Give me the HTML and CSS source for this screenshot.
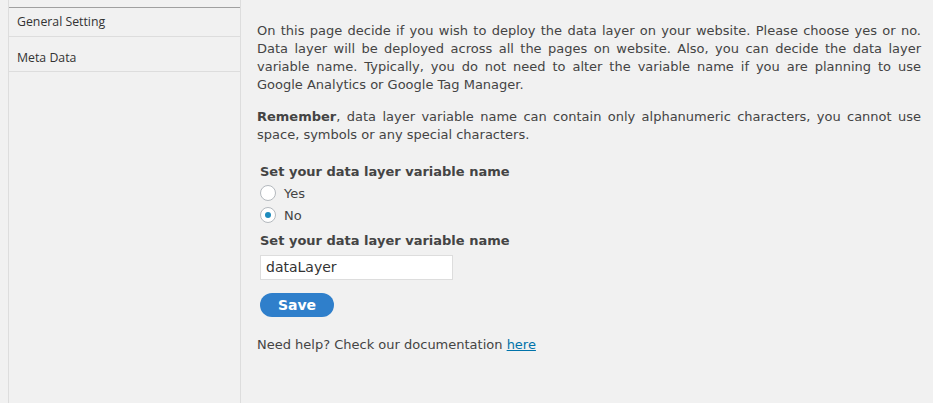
FILE: index.html
```html
<!DOCTYPE html>
<html>
<head>
<meta charset="utf-8">
<link rel="stylesheet" href="styles.css">
</head>
<body>
<div class="wrap">
  <nav class="sidebar">
    <div class="nav-item">General Setting</div>
    <div class="nav-item">Meta Data</div>
  </nav>
  <main class="content">
    <p class="intro">On this page decide if you wish to deploy the data layer on your website. Please choose yes or no. Data layer will be deployed across all the pages on website. Also, you can decide the data layer variable name. Typically, you do not need to alter the variable name if you are planning to use Google Analytics or Google Tag Manager.</p>
    <p class="intro"><strong>Remember</strong>, data layer variable name can contain only alphanumeric characters, you cannot use space, symbols or any special characters.</p>
    <form class="form">
      <div class="label">Set your data layer variable name</div>
      <div class="radios">
        <label class="radio"><span class="dot"></span>Yes</label>
        <label class="radio"><span class="dot checked"></span>No</label>
      </div>
      <div class="label label2">Set your data layer variable name</div>
      <div class="input">dataLayer</div>
      <div class="btn">Save</div>
    </form>
    <p class="help">Need help? Check our documentation <a href="#">here</a></p>
  </main>
</div>
</body>
</html>
```
FILE: styles.css
```css
html, body { margin: 0; padding: 0; }
body {
  background: #f1f1f1;
  font-family: "DejaVu Sans", Verdana, sans-serif;
  font-size: 13px;
  color: #444;
}
.wrap {
  display: flex;
  padding-left: 8px;
  height: 403px;
  box-sizing: border-box;
}
.sidebar {
  width: 231px;
  border-left: 1px solid #ddd;
  border-right: 1px solid #ddd;
  padding-top: 7px;
  flex-shrink: 0;
  font-family: "Open Sans", "Noto Sans", sans-serif;
}
.nav-item {
  border-bottom: 1px solid #ddd;
  box-sizing: border-box;
  line-height: 28px;
  padding-left: 8px;
  font-size: 12.3px;
  color: #333;
}
.nav-item:first-child {
  border-top: 1px solid #a0a0a0;
  height: 30px;
}
.nav-item:last-child { height: 35px; padding-top: 7px; }
.content {
  flex: 1;
  padding: 22px 12px 0 16px;
}
.intro {
  margin: 0 0 14px 0;
  line-height: 18px;
  text-align: justify;
}
.intro + .intro { margin-bottom: 0; }
.form { padding-left: 3px; margin-top: 19px; }
.label { font-weight: bold; line-height: 18px; }
.radios { padding-top: 1px; }
.radio {
  display: flex;
  align-items: center;
  height: 22px;
}
.dot {
  width: 14px; height: 14px;
  border: 1px solid #b4b9be;
  border-radius: 50%;
  background: #fff;
  margin-right: 8px;
  box-sizing: content-box;
  display: flex; align-items: center; justify-content: center;
}
.dot.checked::after {
  content: "";
  width: 6px; height: 6px; border-radius: 50%;
  background: #1e8cbe;
}
.label2 { margin-top: 6px; }
.input {
  margin-top: 5px;
  width: 186px;
  height: 23px;
  border: 1px solid #ddd;
  background: #fff;
  padding-left: 5px;
  line-height: 23px;
  font-size: 14px;
  color: #333;
}
.btn {
  margin-top: 13px;
  width: 74px;
  height: 24px;
  border-radius: 12px;
  background: #2f7fcb;
  color: #fff;
  font-weight: bold;
  font-size: 14px;
  text-align: center;
  line-height: 24px;
}
.help { margin: 19px 0 0 0; line-height: 18px; }
.help a { color: #0073aa; }
```
